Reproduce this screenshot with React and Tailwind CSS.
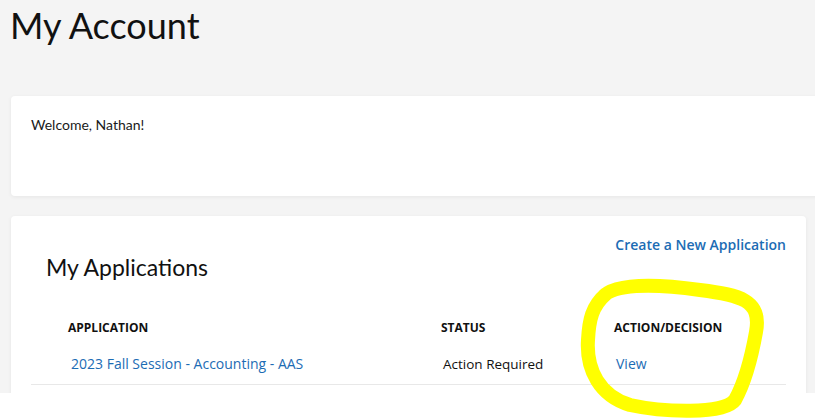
export default function App() {
  return (
    <div className="relative w-[815px] h-[419px] overflow-hidden bg-white">
      <div className="h-[393px] overflow-hidden bg-[#f4f4f4] flex flex-col">
        <h1 className="ml-[10px] mt-[2px] h-[94px] shrink-0 text-[36px] leading-[46px] text-[#111] font-['Lato',sans-serif]">My Account</h1>

        <div className="ml-[11px] w-[830px] h-[100px] shrink-0 bg-white rounded-[4px] shadow-[0_1px_4px_rgba(0,0,0,0.06)] pl-[20px] pt-[19px]">
          <p className="text-[14px] leading-[20px] text-[#1a1a1a] font-['Lato',sans-serif]">Welcome, Nathan!</p>
        </div>

        <div className="ml-[11px] mt-[20px] w-[795px] h-[220px] shrink-0 bg-white rounded-[4px] shadow-[0_1px_4px_rgba(0,0,0,0.06)] pt-[19px] px-[20px]">
          <div className="flex justify-end">
            <a className="text-[14px] leading-[20px] font-semibold text-[#1c6cb4] font-['Open_Sans',sans-serif]">Create a New Application</a>
          </div>
          <h2 className="ml-[15px] mt-[-2px] text-[23px] leading-[28px] text-[#111] font-['Lato',sans-serif]">My Applications</h2>

          <div className="font-['Open_Sans',sans-serif] mt-[38px]">
            <div className="grid grid-cols-[373px_173px_1fr] pl-[37px] text-[12px] leading-[18px] font-bold text-[#111] uppercase">
              <div>Application</div>
              <div>Status</div>
              <div>Action/Decision</div>
            </div>
            <div className="grid grid-cols-[373px_173px_1fr] pl-[37px] mt-[17px] pb-[10px] text-[14px] leading-[20px] border-b border-[#e8e8e8]">
              <a className="pl-[3px] text-[#1c6cb4]">2023 Fall Session - Accounting - AAS</a>
              <div className="pl-[2px] text-[13.5px] text-[#111]">Action Required</div>
              <a className="pl-[2px] text-[#1c6cb4]">View</a>
            </div>
          </div>
        </div>
      </div>

      <svg className="absolute left-0 top-0 pointer-events-none" width="815" height="419" viewBox="0 0 815 419">
        <path
          d="M 602 298 C 612 284, 650 283, 700 290 C 740 295, 762 300, 756 332 C 751 360, 745 382, 735 400 C 724 415, 662 412, 630 405 C 600 396, 586 370, 588 340 C 589 320, 592 306, 606 294"
          fill="none"
          stroke="#ffff00"
          strokeWidth="14"
          strokeLinecap="round"
          strokeLinejoin="round"
        />
      </svg>
    </div>
  );
}
